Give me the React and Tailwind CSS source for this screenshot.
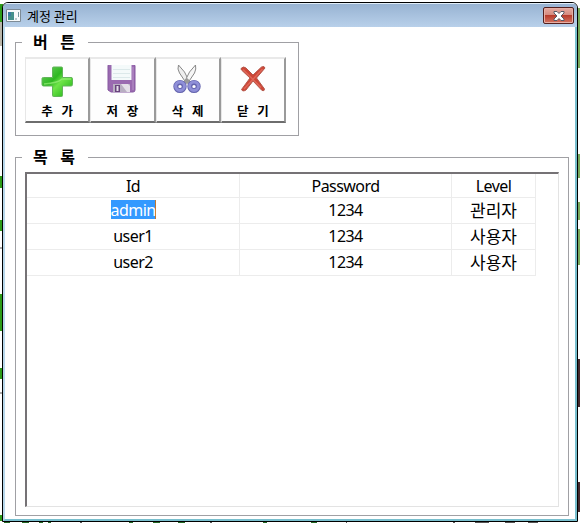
const Plus = () => (
  <svg width="32" height="32" viewBox="0 0 32 32">
    <defs>
      <linearGradient id="plus" x1="0" y1="0" x2="1" y2="1">
        <stop offset="0" stopColor="#6fd062" />
        <stop offset="0.4" stopColor="#2fb822" />
        <stop offset="0.56" stopColor="#6fe548" />
        <stop offset="1" stopColor="#12a80f" />
      </linearGradient>
    </defs>
    <path d="M12.500 2h8q1 0 1 1v9.500H30q1.500 0 1.500 1v6q0 1.500-1.500 1.500h-8.500v9.500q0 1-1 1h-8q-1 0-1-1V21H2.500q-1.500 0-1.500-1.500v-6q0-1 1.500-1h9V3q0-1 1-1z" fill="url(#plus)" stroke="#62b45a" strokeWidth="1" />
    <path d="M3 19q14-1 18-5h9" fill="none" stroke="#a5f585" strokeWidth="1.500" opacity=".6" />
  </svg>
);

const Floppy = () => (
  <svg width="32" height="32" viewBox="0 0 32 32">
    <path d="M2 1q0-1.500 1-1.500h24q2 0 2 1.500v24q0 2-2 2H5l-3-2z" fill="#9a6ab0" stroke="#8659a0" />
    <path d="M5.500 0h20v15h-20z" fill="#f4fafa" />
    <path d="M7 4.500h17M7 8.500h17M7 12.500h17" stroke="#dce9ea" />
    <path d="M7 19h17v8H7z" fill="#b9afc2" />
    <path d="M9 20h5v7H9z" fill="#69447d" />
    <path d="M10.500 21h2v5h-2z" fill="#e5deea" />
    <path d="M15 19l6 8h3v-6l-2-2z" fill="#e4dfe8" />
    <path d="M27 2v23" stroke="#b793c8" />
  </svg>
);

const Scissors = () => (
  <svg width="32" height="32" viewBox="0 0 32 32">
    <path d="M6.500 0q-1.500 4 1 8l6 9 3-2-4-8z" fill="#eee" stroke="#888" />
    <path d="M23.500 0q1 4-1 8l-6 9-3-2 4-8z" fill="#f6f6f6" stroke="#888" />
    <path d="M10.500 17l4.500-4 4.500 4-4.500 2z" fill="#999" />
    <ellipse cx="8" cy="21.500" rx="4.200" ry="4" fill="#fff" stroke="#6464ae" strokeWidth="5" />
    <ellipse cx="22" cy="21.500" rx="4.200" ry="4" fill="#fff" stroke="#6464ae" strokeWidth="5" />
    <ellipse cx="8" cy="21.300" rx="4.400" ry="4.200" fill="none" stroke="#8f8fd8" strokeWidth="3" />
    <ellipse cx="22" cy="21.300" rx="4.400" ry="4.200" fill="none" stroke="#8f8fd8" strokeWidth="3" />
  </svg>
);

const Cross = () => (
  <svg width="32" height="32" viewBox="0 0 32 32">
    <path d="M4.500 3q2-2 4.500 0l7 7 8.500-8q3-1.500 3.500 1l-8.500 10 8 11q0 2.500-2.500 1.500l-9-9.500-7 9q-3.500 2-4.500-.500l8.500-11.500-8.500-8q-1-1 0-2z" fill="#cf4637" stroke="#b3594c" />
    <path d="M6 4.500l18 18M7 24L25.500 4" stroke="#ea8070" strokeWidth="1.300" opacity=".6" />
  </svg>
);

const buttons = [
  { label: '추 가', Icon: Plus },
  { label: '저 장', Icon: Floppy },
  { label: '삭 제', Icon: Scissors },
  { label: '닫 기', Icon: Cross },
];

const rows = [
  ['admin', '1234', '관리자'],
  ['user1', '1234', '사용자'],
  ['user2', '1234', '사용자'],
];

function Backdrop() {
  return (
    <svg className="absolute inset-0" width="580" height="523">
      <rect width="580" height="523" fill="#fff" />
      <path d="M0 4h3v18H0zM0 176h3v12H0zM0 220h3v11H0zM0 294h3v37H0zM0 368h3v11H0zM0 515h3v6H0z" fill="#2c9c18" />
      <path d="M0 22h3v24H0z" fill="#b9b6aa" />
      <path d="M0 248h3M0 393h3" stroke="#555" />
      <path d="M578 8h2v60h-2zM578 154h2v24h-2zM578 202h2v18h-2zM578 229h2v36h-2z" fill="#78a95a" />
      <path d="M578 359h2v48h-2zM578 482h2v30h-2z" fill="#44282c" />
      <path d="M4 522h6M22 522h7M39 522h4M48 522h3M129 522h4M153 522h7M178 522h7M263 522h4M311 522h6" stroke="#246825" strokeWidth="2" />
      <path d="M80 522h2M210 522h2M346 522h1M453 522h2M475 522h14M505 522h10M528 522h10" stroke="#555" strokeWidth="2" />
    </svg>
  );
}

function Group({ title, className, children }) {
  return (
    <fieldset className={`relative min-w-0 shrink-0 border border-[#a0a0a4] ${className}`}>
      <legend className="absolute -top-[12px] left-[6px] h-[21px] w-[66px] bg-white pl-[11px] font-['Noto_Sans_CJK_KR',sans-serif] text-[16px] leading-[21px] font-bold whitespace-pre text-black [word-spacing:9px]">
        {title}
      </legend>
      {children}
    </fieldset>
  );
}

export default function App() {
  return (
    <div className="relative h-[523px] w-[580px] overflow-hidden p-[2px] font-['Noto_Sans','Noto_Sans_CJK_KR',sans-serif]">
      <Backdrop />
      <main className="relative flex h-[520px] w-[576px] flex-col overflow-hidden rounded-t-[6px] border border-black bg-white">
        <header className="flex h-[24px] shrink-0 items-center border-t border-[#e0edf8] bg-linear-to-b from-[#98b3d2] to-[#b8d0ea] pl-[3px]">
          <svg width="16" height="14" viewBox="0 0 16 14">
            <path d="M.5.500h14v12H.5z" fill="#f7fafb" stroke="#7e8b96" />
            <path d="M2 3h6v8H2z" fill="#43908b" />
            <path d="M2 3h3v4H2z" fill="#397ba0" />
            <path d="M9 10h2M12.500 3v5" stroke="#7799a0" />
          </svg>
          <h1 className="ml-[5px] font-['Noto_Sans_CJK_KR',sans-serif] text-[13px] leading-[22px] text-black">계정 관리</h1>
          <button aria-label="닫기" className="mr-[3px] ml-auto flex h-[17px] w-[31px] items-center justify-center rounded-[2px] border border-[#54201e] bg-[linear-gradient(#e6aaa0_0%,#d58b80_45%,#b83c2c_50%,#d47462_100%)] shadow-[inset_0_0_0_1px_#e6afa5]">
            <svg width="12" height="10" viewBox="0 0 12 10">
              <path d="M1 .500h3l2 2 2-2h3v1.500L8 5l3 3v1.500H8l-2-2-2 2H1V8l3-3-3-3z" fill="#fff" stroke="#555b68" />
            </svg>
          </button>
        </header>
        <div className="flex flex-1 flex-col border-x-2 border-b-2 border-l-[#b7d7ea] border-r-[#78bfce] border-b-[#78bfce] pt-[15px] pl-[10px]">
          <Group title="버 튼" className="h-[94px] w-[284px] pt-[14px] pl-[9px]">
            <div className="flex">
              {buttons.map(({ label, Icon }) => (
                <button key={label} className="flex h-[66px] w-[65.25px] flex-col items-center border-t-2 border-r-2 border-b-2 border-l border-t-[#e9e9e9] border-r-[#9a9a9a] border-b-[#6d6d6d] border-l-[#e7e7e7] bg-[#fefefe] pt-[6px]">
                  <Icon />
                  <span className="mt-[6px] font-['Noto_Sans_CJK_KR',sans-serif] text-[12.5px] leading-[16px] font-bold whitespace-pre text-black [word-spacing:6px]">{label}</span>
                </button>
              ))}
            </div>
          </Group>
          <Group title="목 록" className="mt-[21px] h-[359px] w-[554px] pt-[14px] pl-[9px]">
            <div className="h-[335px] w-[534px] border-t-2 border-r border-b border-l-2 border-t-[#757275] border-r-[#e3e3e3] border-b-[#e3e3e3] border-l-[#757275]">
              <table className="w-[509px] table-fixed border-separate border-spacing-0 text-center text-[16px] tracking-[-0.55px] text-black">
                <colgroup>
                  <col className="w-[213px]" />
                  <col className="w-[212px]" />
                  <col className="w-[84px]" />
                </colgroup>
                <thead>
                  <tr className="h-[24px]">
                    {['Id', 'Password', 'Level'].map((h) => (
                      <th key={h} className="border-r border-b border-[#ececec] p-0 pt-px leading-[22px] font-normal">{h}</th>
                    ))}
                  </tr>
                </thead>
                <tbody>
                  {rows.map(([id, password, level]) => (
                    <tr key={id} className="h-[26px]">
                      <td className="border-r border-b border-[#ececec] p-0 align-top leading-[25px]">
                        {id === 'admin' ? (
                          <span className="mx-auto mt-[2px] block h-[19px] w-[45px] border-r border-[#c07830] bg-[#3399ff] leading-[20px] text-white">{id}</span>
                        ) : id}
                      </td>
                      <td className="border-r border-b border-[#ececec] p-0 align-top leading-[25px]">{password}</td>
                      <td className="border-r border-b border-[#ececec] p-0 align-top font-['Noto_Sans_CJK_KR',sans-serif] text-[17px] leading-[23px] font-normal tracking-normal">{level}</td>
                    </tr>
                  ))}
                </tbody>
              </table>
            </div>
          </Group>
        </div>
      </main>
    </div>
  );
}
